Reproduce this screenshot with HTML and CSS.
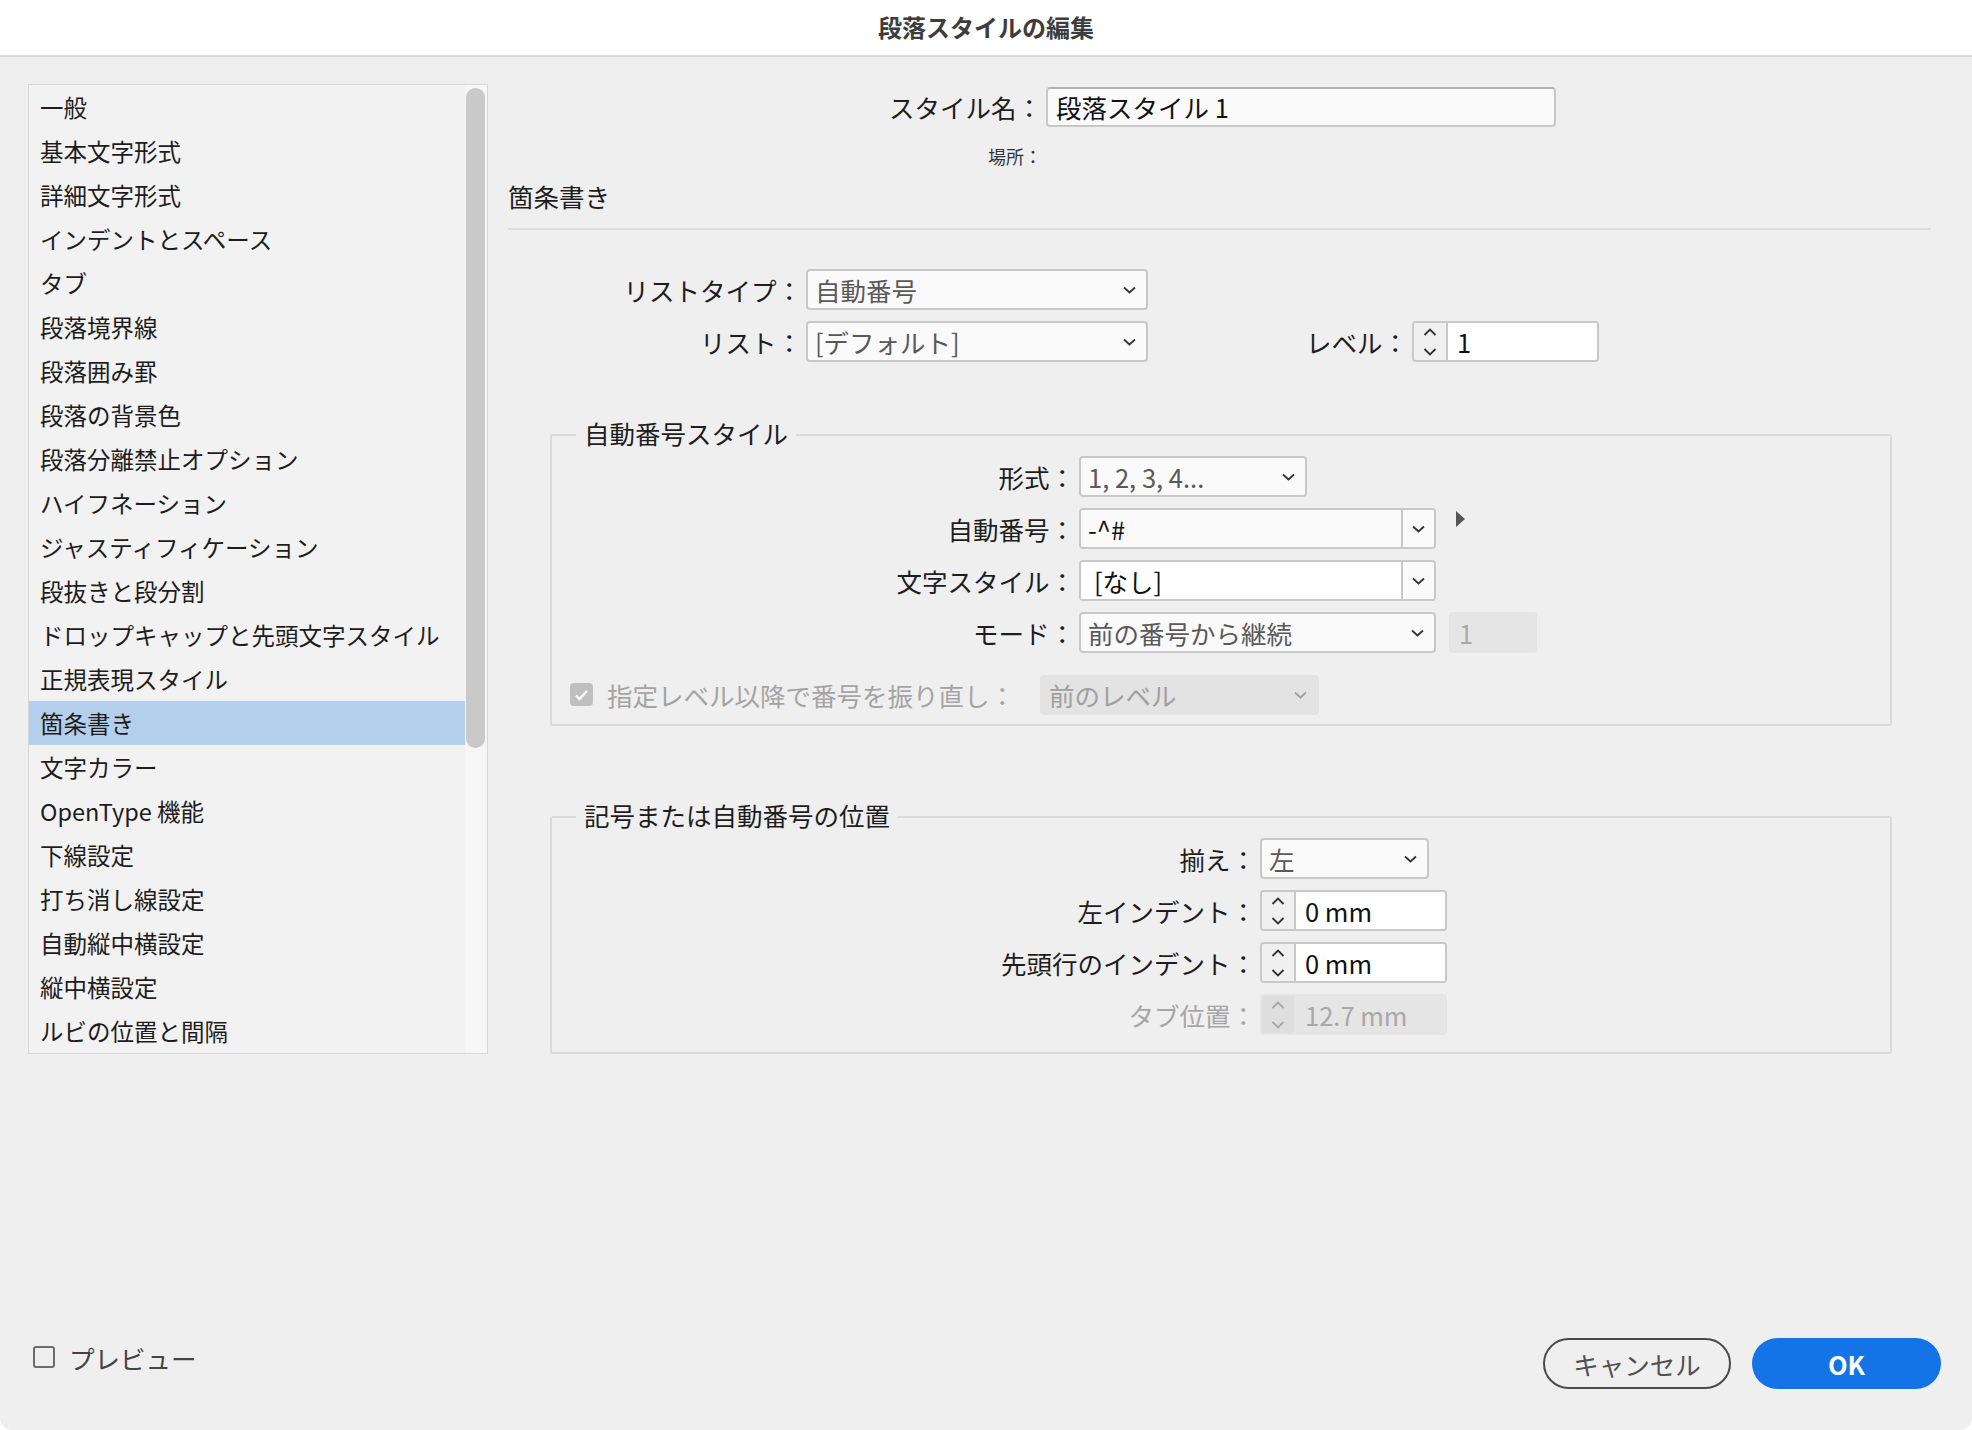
FILE: index.html
```html
<!DOCTYPE html>
<html lang="ja">
<head>
  <meta charset="UTF-8">
  <meta name="viewport" content="width=device-width, initial-scale=1.0">
  <title>段落スタイルの編集</title>
  <link rel="stylesheet" href="styles.css">
</head>
<body>
  <div class="dialog">
    <div class="titlebar">段落スタイルの編集</div>

    <div class="content">
      <div class="category-list">
        <ul class="items">
          <li>一般</li>
          <li>基本文字形式</li>
          <li>詳細文字形式</li>
          <li>インデントとスペース</li>
          <li>タブ</li>
          <li>段落境界線</li>
          <li>段落囲み罫</li>
          <li>段落の背景色</li>
          <li>段落分離禁止オプション</li>
          <li>ハイフネーション</li>
          <li>ジャスティフィケーション</li>
          <li>段抜きと段分割</li>
          <li>ドロップキャップと先頭文字スタイル</li>
          <li>正規表現スタイル</li>
          <li class="selected">箇条書き</li>
          <li>文字カラー</li>
          <li>OpenType 機能</li>
          <li>下線設定</li>
          <li>打ち消し線設定</li>
          <li>自動縦中横設定</li>
          <li>縦中横設定</li>
          <li>ルビの位置と間隔</li>
        </ul>
        <div class="track"><div class="thumb"></div></div>
      </div>

      <div class="panel">
        <div class="row name-row">
          <span class="label">スタイル名：</span>
          <div class="field name-field">段落スタイル 1</div>
        </div>
        <div class="row place-row">
          <span class="label">場所：</span>
        </div>

        <h3 class="section-title">箇条書き</h3>

        <div class="row list-row first">
          <span class="label">リストタイプ：</span>
          <div class="dropdown wide">
            <span class="value muted">自動番号</span>
            <svg class="chev" width="13" height="8" viewBox="0 0 13 8"><path d="M1 1.5l5.5 5 5.5-5" fill="none" stroke="currentColor" stroke-width="1.8"/></svg>
          </div>
        </div>
        <div class="row list-row">
          <span class="label">リスト：</span>
          <div class="dropdown wide">
            <span class="value muted">[デフォルト]</span>
            <svg class="chev" width="13" height="8" viewBox="0 0 13 8"><path d="M1 1.5l5.5 5 5.5-5" fill="none" stroke="currentColor" stroke-width="1.8"/></svg>
          </div>
          <span class="label level-label">レベル：</span>
          <div class="spinner">
            <div class="spin-buttons">
              <svg width="14" height="30" viewBox="0 0 14 30"><path d="M1.5 8l5.5-5.5 5.5 5.5M1.5 22l5.5 5.5 5.5-5.5" fill="none" stroke="currentColor" stroke-width="1.8"/></svg>
            </div>
            <div class="spin-value">1</div>
          </div>
        </div>

        <fieldset class="group numbering">
          <legend>自動番号スタイル</legend>
          <div class="group-row">
            <span class="label">形式：</span>
            <div class="dropdown format">
              <span class="value muted">1, 2, 3, 4...</span>
              <svg class="chev" width="13" height="8" viewBox="0 0 13 8"><path d="M1 1.5l5.5 5 5.5-5" fill="none" stroke="currentColor" stroke-width="1.8"/></svg>
            </div>
          </div>
          <div class="group-row">
            <span class="label">自動番号：</span>
            <div class="combo">
              <div class="combo-text">-^#</div>
              <div class="combo-btn">
                <svg class="chev" width="13" height="8" viewBox="0 0 13 8"><path d="M1 1.5l5.5 5 5.5-5" fill="none" stroke="currentColor" stroke-width="1.8"/></svg>
              </div>
            </div>
            <svg class="more-arrow" width="10" height="16" viewBox="0 0 10 16"><path d="M0 0L9 8L0 16Z" fill="#555"/></svg>
          </div>
          <div class="group-row">
            <span class="label">文字スタイル：</span>
            <div class="combo">
              <div class="combo-text white pad">[なし]</div>
              <div class="combo-btn">
                <svg class="chev" width="13" height="8" viewBox="0 0 13 8"><path d="M1 1.5l5.5 5 5.5-5" fill="none" stroke="currentColor" stroke-width="1.8"/></svg>
              </div>
            </div>
          </div>
          <div class="group-row">
            <span class="label">モード：</span>
            <div class="dropdown mode">
              <span class="value muted">前の番号から継続</span>
              <svg class="chev" width="13" height="8" viewBox="0 0 13 8"><path d="M1 1.5l5.5 5 5.5-5" fill="none" stroke="currentColor" stroke-width="1.8"/></svg>
            </div>
            <div class="disabled-field">1</div>
          </div>
          <div class="group-row restart-row">
            <span class="check-disabled">
              <svg width="15" height="12" viewBox="0 0 15 12"><path d="M2 6.5l3.5 3.5L13 2" fill="none" stroke="#fff" stroke-width="2.4"/></svg>
            </span>
            <span class="restart-label">指定レベル以降で番号を振り直し：</span>
            <div class="dropdown disabled">
              <span class="value">前のレベル</span>
              <svg class="chev" width="13" height="8" viewBox="0 0 13 8"><path d="M1 1.5l5.5 5 5.5-5" fill="none" stroke="currentColor" stroke-width="1.8"/></svg>
            </div>
          </div>
        </fieldset>

        <fieldset class="group position">
          <legend>記号または自動番号の位置</legend>
          <div class="group-row">
            <span class="label">揃え：</span>
            <div class="dropdown align">
              <span class="value muted">左</span>
              <svg class="chev" width="13" height="8" viewBox="0 0 13 8"><path d="M1 1.5l5.5 5 5.5-5" fill="none" stroke="currentColor" stroke-width="1.8"/></svg>
            </div>
          </div>
          <div class="group-row">
            <span class="label">左インデント：</span>
            <div class="spinner">
              <div class="spin-buttons">
                <svg width="14" height="30" viewBox="0 0 14 30"><path d="M1.5 8l5.5-5.5 5.5 5.5M1.5 22l5.5 5.5 5.5-5.5" fill="none" stroke="currentColor" stroke-width="1.8"/></svg>
              </div>
              <div class="spin-value">0 mm</div>
            </div>
          </div>
          <div class="group-row">
            <span class="label">先頭行のインデント：</span>
            <div class="spinner">
              <div class="spin-buttons">
                <svg width="14" height="30" viewBox="0 0 14 30"><path d="M1.5 8l5.5-5.5 5.5 5.5M1.5 22l5.5 5.5 5.5-5.5" fill="none" stroke="currentColor" stroke-width="1.8"/></svg>
              </div>
              <div class="spin-value">0 mm</div>
            </div>
          </div>
          <div class="group-row">
            <span class="label dim">タブ位置：</span>
            <div class="spinner disabled">
              <div class="spin-buttons">
                <svg width="14" height="30" viewBox="0 0 14 30"><path d="M1.5 8l5.5-5.5 5.5 5.5M1.5 22l5.5 5.5 5.5-5.5" fill="none" stroke="currentColor" stroke-width="1.8"/></svg>
              </div>
              <div class="spin-value">12.7 mm</div>
            </div>
          </div>
        </fieldset>
      </div>
    </div>

    <div class="footer">
      <label class="preview"><span class="checkbox"></span>プレビュー</label>
      <div class="buttons">
        <button class="btn btn-cancel">キャンセル</button>
        <button class="btn btn-ok">OK</button>
      </div>
    </div>
  </div>
</body>
</html>
```

FILE: styles.css
```css
* {
  box-sizing: border-box;
}
html, body {
  margin: 0;
  height: 100%;
}
body {
  background: #fff;
  font-family: "Noto Sans CJK JP", "Noto Sans", sans-serif;
  color: #1d1d1d;
}
.dialog {
  width: 1972px;
  height: 1430px;
  background: #efefef;
  border-radius: 0 0 12px 12px;
  display: flex;
  flex-direction: column;
  overflow: hidden;
}
.titlebar {
  flex: none;
  height: 57px;
  background: #fff;
  border-bottom: 2px solid #d9d9d9;
  text-align: center;
  font-size: 24px;
  font-weight: 700;
  line-height: 53px;
  color: #3d3d3d;
}
.content {
  flex: 1;
  display: flex;
  align-items: flex-start;
  padding: 27px 0 0 28px;
}

/* category list */
.category-list {
  flex: none;
  width: 460px;
  height: 970px;
  display: flex;
  border: 1px solid #d7d7d7;
  background: #f2f2f2;
}
.items {
  list-style: none;
  margin: 0;
  padding: 0;
  width: 436px;
}
.items li {
  height: 44px;
  line-height: 44px;
  padding-left: 11px;
  font-size: 23.5px;
  white-space: nowrap;
}
.items li.selected {
  background: #b4cfec;
}
.track {
  width: 22px;
  padding: 3px 0 0 1px;
  background: #f6f6f6;
}
.thumb {
  width: 19px;
  height: 660px;
  border-radius: 10px;
  background: #c9c9c9;
}

/* right panel */
.panel {
  flex: 1;
  padding: 3px 41px 0 20px;
  font-size: 25.5px;
}
.row {
  display: flex;
  align-items: center;
}
.label {
  flex: none;
  text-align: right;
  margin-right: 4px;
  white-space: nowrap;
  line-height: 34px;
}
.name-row .label,
.place-row .label {
  width: 534px;
}
.field {
  height: 40px;
  width: 510px;
  background: #fafafa;
  border: 2px solid #c8c8c8;
  border-top-color: #b2b2b2;
  border-radius: 4px;
  padding-left: 8px;
  line-height: 36px;
  color: #111;
}
.place-row {
  margin-top: 18px;
  height: 22px;
}
.place-row .label {
  font-size: 18px;
  line-height: 22px;
  color: #333;
}
.section-title {
  margin: 14px 0 0;
  font-size: 25.5px;
  font-weight: 400;
  line-height: 30px;
  padding-bottom: 17px;
  border-bottom: 2px solid #dcdcdc;
}
.list-row {
  height: 41px;
  margin-top: 11px;
}
.list-row.first {
  margin-top: 39px;
}
.list-row .label {
  width: 294px;
}
.list-row .level-label {
  width: 260px;
}

/* controls */
.dropdown {
  flex: none;
  height: 41px;
  display: flex;
  align-items: center;
  justify-content: space-between;
  background: #fafafa;
  border: 2px solid #c8c8c8;
  border-radius: 4px;
  padding: 0 10px 0 7px;
  color: #333;
}
.dropdown.wide { width: 342px; }
.dropdown.format { width: 228px; }
.dropdown.mode { width: 357px; }
.dropdown.align { width: 169px; }
.dropdown.disabled {
  width: 279px;
  height: 40px;
  background: #e3e3e3;
  border-color: #e3e3e3;
  color: #a0a0a0;
}
.value {
  line-height: 37px;
  white-space: nowrap;
}
.muted {
  color: #595959;
}
.chev {
  flex: none;
  display: block;
}
.combo {
  flex: none;
  width: 357px;
  height: 41px;
  display: flex;
  border: 2px solid #c8c8c8;
  border-radius: 4px;
  overflow: hidden;
}
.combo-text {
  flex: 1;
  padding-left: 7px;
  line-height: 37px;
  background: #fafafa;
  color: #111;
}
.combo-text.white {
  background: #fff;
}
.combo-text.pad {
  padding-left: 13px;
}
.combo-btn {
  width: 33px;
  border-left: 2px solid #c8c8c8;
  background: #fafafa;
  display: flex;
  align-items: center;
  justify-content: center;
  color: #333;
}
.more-arrow {
  flex: none;
  align-self: flex-start;
  margin: 3px 0 0 20px;
}
.spinner {
  flex: none;
  width: 187px;
  height: 41px;
  display: flex;
  border: 2px solid #c8c8c8;
  border-radius: 4px;
  overflow: hidden;
  color: #111;
}
.spin-buttons {
  width: 34px;
  border-right: 2px solid #c8c8c8;
  background: #f0f0f0;
  display: flex;
  align-items: center;
  justify-content: center;
  color: #333;
}
.spin-value {
  flex: 1;
  padding-left: 9px;
  line-height: 37px;
  background: #fff;
}
.spinner.disabled {
  border-color: #e5e5e5;
  background: #e5e5e5;
  color: #a8a8a8;
}
.spinner.disabled .spin-buttons {
  border-right-color: #e5e5e5;
  background: #dedede;
  color: #a8a8a8;
}
.spinner.disabled .spin-value {
  background: #e5e5e5;
}
.disabled-field {
  flex: none;
  width: 88px;
  height: 41px;
  margin-left: 13px;
  padding-left: 10px;
  line-height: 41px;
  border-radius: 4px;
  background: #e5e5e5;
  color: #a9a9a9;
}

/* groups */
.group {
  margin: 54px 39px 0 42px;
  padding: 2px 0 9px;
  border: 2px solid #dadada;
  border-radius: 3px;
  min-width: 0;
}
.group legend {
  margin-left: 24px;
  padding: 0 8px 4px;
  font-size: 25.5px;
  line-height: 34px;
}
.group-row {
  display: flex;
  align-items: center;
  height: 41px;
  margin-top: 11px;
}
.group-row:first-of-type {
  margin-top: 0;
}
.numbering .label {
  width: 523px;
}
.position {
  margin-top: 72px;
  padding-bottom: 17px;
}
.position .label {
  width: 704px;
}
.label.dim {
  color: #a6a6a6;
}
.restart-row {
  margin-top: 21px;
  padding-left: 18px;
}
.check-disabled {
  flex: none;
  width: 23px;
  height: 23px;
  border-radius: 4px;
  background: #bfbfbf;
  display: flex;
  align-items: center;
  justify-content: center;
}
.restart-label {
  flex: none;
  width: 433px;
  margin-left: 14px;
  color: #a4a4a4;
  white-space: nowrap;
  line-height: 34px;
}

/* footer */
.footer {
  flex: none;
  height: 92px;
  display: flex;
  align-items: flex-start;
  padding: 0 31px 41px 33px;
}
.preview {
  display: flex;
  align-items: center;
  margin-top: 2px;
  height: 34px;
  font-size: 25.5px;
  color: #444;
}
.checkbox {
  width: 22px;
  height: 22px;
  border: 2px solid #6c6c6c;
  border-radius: 3px;
  margin-right: 14px;
}
.buttons {
  margin-left: auto;
  display: flex;
  gap: 21px;
}
.btn {
  height: 51px;
  border-radius: 26px;
  font-family: inherit;
  font-size: 25.5px;
  cursor: pointer;
}
.btn-cancel {
  width: 188px;
  border: 2px solid #4a4a4a;
  background: transparent;
  color: #505050;
}
.btn-ok {
  width: 189px;
  border: none;
  background: #1473e6;
  color: #fff;
  font-weight: 700;
}
```
